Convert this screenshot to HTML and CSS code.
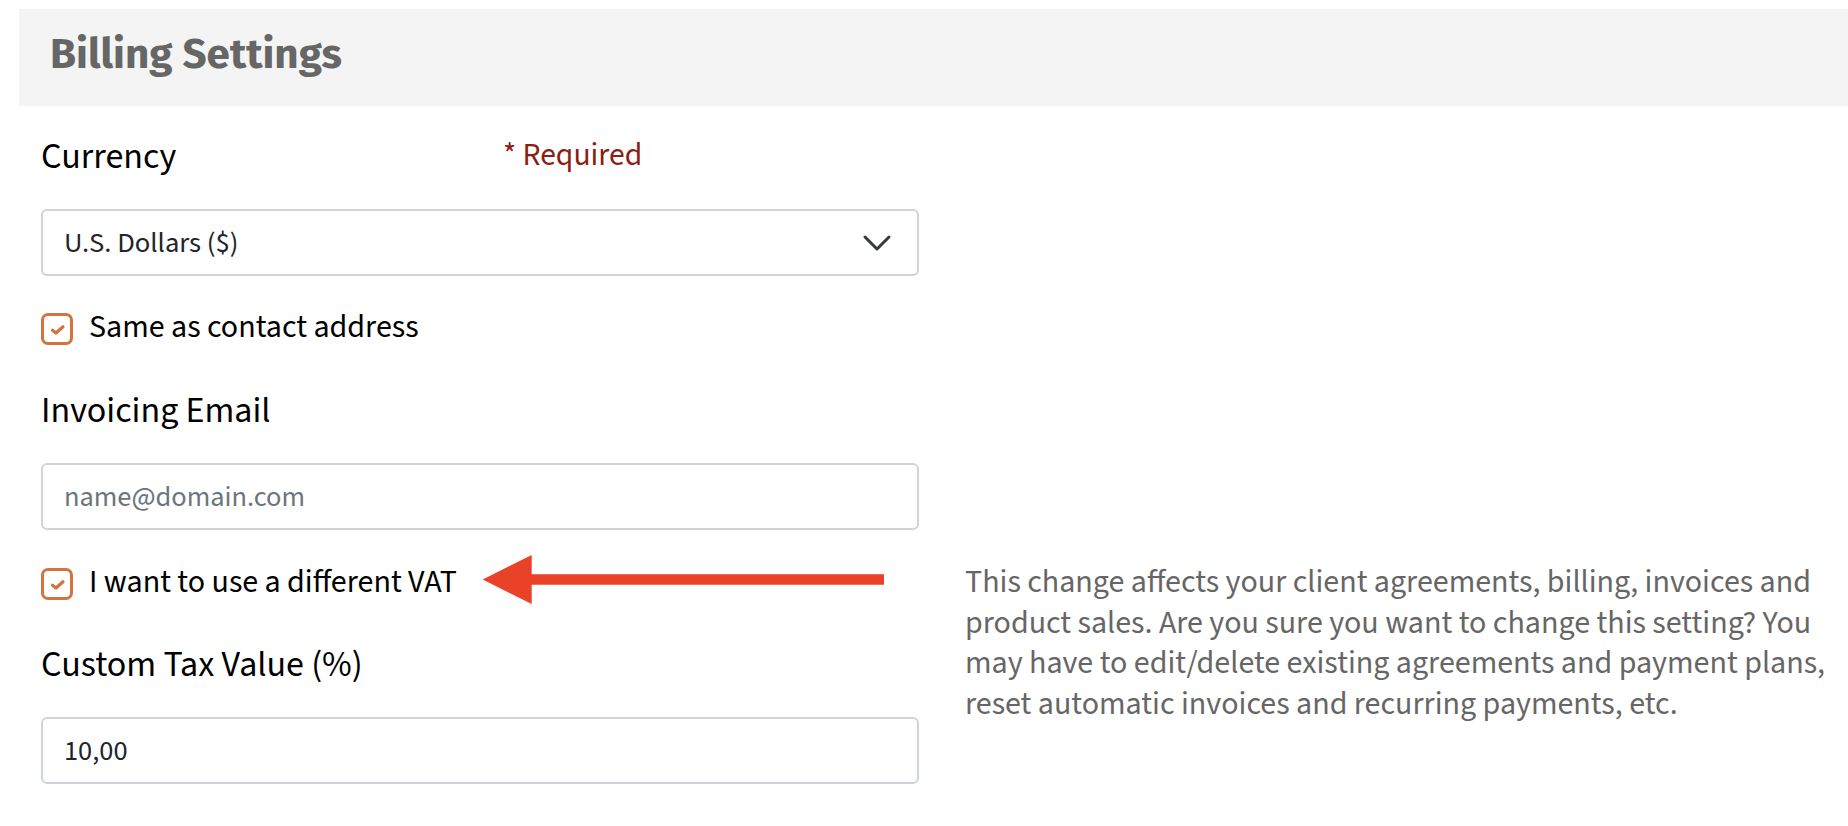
FILE: index.html
```html
<!DOCTYPE html>
<html lang="en">
<head>
<meta charset="utf-8">
<title>Billing Settings</title>
<link rel="stylesheet" href="styles.css">
</head>
<body>
<div class="page">
  <header class="section-header">
    <h2 class="section-title">Billing Settings</h2>
  </header>
  <div class="form">
    <div class="field-head">
      <label class="field-label">Currency</label>
      <span class="required">* Required</span>
    </div>
    <div class="select">
      <span class="select-value">U.S. Dollars ($)</span>
      <svg class="chevron" width="32" height="32" viewBox="0 0 16 16" aria-hidden="true"><path d="m2 5 6 6 6-6" fill="none" stroke="#343a40" stroke-width="1.5" stroke-linecap="round" stroke-linejoin="round"/></svg>
    </div>
    <label class="check-row">
      <span class="checkbox"><svg width="16" height="12" viewBox="0 0 16 12" aria-hidden="true"><path d="M2.5 6.2 6 9 13 2.8" fill="none" stroke="#d2743f" stroke-width="3.2" stroke-linecap="round" stroke-linejoin="round"/></svg></span>
      <span class="check-text">Same as contact address</span>
    </label>
    <label class="field-label spaced">Invoicing Email</label>
    <input class="text-input" type="text" placeholder="name@domain.com">
    <div class="vat-grid">
      <div class="vat-left">
        <label class="check-row vat-row">
          <span class="checkbox"><svg width="16" height="12" viewBox="0 0 16 12" aria-hidden="true"><path d="M2.5 6.2 6 9 13 2.8" fill="none" stroke="#d2743f" stroke-width="3.2" stroke-linecap="round" stroke-linejoin="round"/></svg></span>
          <span class="check-text">I want to use a different VAT</span>
          <svg class="arrow" width="406" height="53" viewBox="0 0 406 53" aria-hidden="true"><polygon points="2.7,26.5 51.7,2 51.7,21.2 404,21.2 404,31.8 51.7,31.8 51.7,51" fill="#ea4129"/></svg>
        </label>
        <label class="field-label spaced tight">Custom Tax Value (%)</label>
        <input class="text-input" type="text" value="10,00">
      </div>
      <p class="vat-note">This change affects your client agreements, billing, invoices and product sales. Are you sure you want to change this setting? You may have to edit/delete existing agreements and payment plans, reset automatic invoices and recurring payments, etc.</p>
    </div>
  </div>
</div>
</body>
</html>
```
FILE: styles.css
```css
html, body {
  margin: 0;
  background: #ffffff;
}

body {
  font-family: "Source Sans 3", "Source Sans Pro", Lato, sans-serif;
  color: #000000;
}

.page {
  padding: 9px 0 0 19px;
}

.section-header {
  background: #f4f4f4;
  height: 97px;
  box-sizing: border-box;
  padding: 20px 0 0 31px;
}

.section-title {
  margin: 0;
  font-family: "Fira Sans", "Source Sans 3", Lato, sans-serif;
  font-weight: 700;
  font-size: 42.2px;
  line-height: 50px;
  color: #666666;
}

.form {
  padding-left: 22px;
}

.field-head {
  display: grid;
  grid-template-columns: 462px auto;
  align-items: start;
  width: 878px;
  margin-top: 26px;
}

.field-label {
  display: block;
  font-size: 36px;
  line-height: 50px;
  color: #000000;
}

.field-label.spaced {
  margin-top: 41px;
}

.field-label.tight {
  margin-top: 40px;
}

.required {
  font-size: 31.6px;
  line-height: 47px;
  color: #8c1d12;
}

.select {
  box-sizing: border-box;
  width: 878px;
  height: 67px;
  margin-top: 27px;
  border: 2px solid #ced4da;
  border-radius: 6px;
  background: #ffffff;
  display: flex;
  align-items: center;
  justify-content: space-between;
  padding: 0 24px 0 21px;
}

.select-value {
  font-size: 28.6px;
  color: #212529;
}

.chevron {
  display: block;
  flex: none;
}

.check-row {
  display: flex;
  align-items: flex-start;
  gap: 16px;
  margin-top: 35px;
}

.checkbox {
  box-sizing: border-box;
  width: 32px;
  height: 32px;
  margin-top: 2px;
  border: 3px solid #d2743f;
  border-radius: 7px;
  background: #ffffff;
  display: flex;
  align-items: center;
  justify-content: center;
  flex: none;
}

.checkbox svg {
  display: block;
  margin: 1px 0 0 1px;
}

.check-text {
  font-size: 32px;
  line-height: 32px;
  color: #000000;
}

.text-input {
  display: block;
  box-sizing: border-box;
  width: 878px;
  height: 67px;
  margin: 27px 0 0;
  padding: 0 21px;
  border: 2px solid #ced4da;
  border-radius: 6px;
  background: #ffffff;
  font-family: "Source Sans 3", "Source Sans Pro", Lato, sans-serif;
  font-size: 28.4px;
  color: #212529;
  outline: none;
}

.text-input::placeholder {
  color: #6c757d;
  opacity: 1;
}

.vat-grid {
  display: grid;
  grid-template-columns: 878px 870px;
  column-gap: 46px;
  align-items: start;
  margin-top: 36px;
}

.vat-row {
  position: relative;
  margin-top: 0;
}

.arrow {
  position: absolute;
  left: 439px;
  top: -13px;
}

.vat-note {
  margin: -4px 0 0;
  font-size: 32px;
  line-height: 40.6px;
  color: #666666;
}
```
